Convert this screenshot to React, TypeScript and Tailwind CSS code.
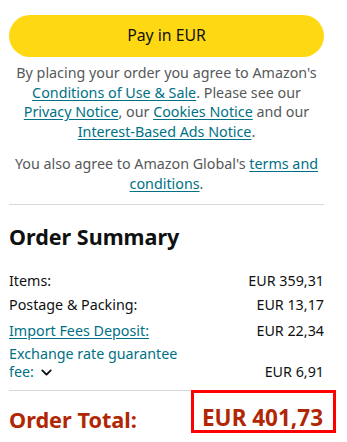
import { ChevronDown } from 'lucide-react';

const link = 'text-[#007185] underline underline-offset-2';

const rows = [
  { label: 'Items:', value: 'EUR 359,31' },
  { label: 'Postage & Packing:', value: 'EUR 13,17' },
];

export default function App() {
  return (
    <div className="w-[347px] h-[442px] overflow-hidden bg-white font-['Noto_Sans',sans-serif]">
      <div className="ml-[9px] w-[315px] pt-[15px]">
        {/* Pay button */}
        <button className="w-full h-[42px] rounded-full bg-[#FFD814] text-[15.8px] text-[#0f1111]">
          Pay in EUR
        </button>

        {/* Legal text */}
        <p className="mt-[6px] -mx-[4px] text-center text-[14.3px] leading-[19.5px] text-[#565959]">
          By placing your order you agree to Amazon's
          <br />
          <span className={link}>Conditions of Use &amp; Sale</span>. Please see our
          <br />
          <span className={link}>Privacy Notice</span>, our <span className={link}>Cookies Notice</span> and our
          <br />
          <span className={link}>Interest-Based Ads Notice</span>.
        </p>
        <p className="mt-[13px] -mx-[4px] text-center text-[14.3px] leading-[19.5px] text-[#565959]">
          You also agree to Amazon Global's <span className={link}>terms and</span>
          <br />
          <span className={link}>conditions</span>.
        </p>

        <div className="mt-[11px] border-t border-[#d5d9d9]" />

        {/* Summary */}
        <h2 className="mt-[20px] text-[21.5px] font-bold leading-[24px] text-[#0f1111]">Order Summary</h2>

        <div className="mt-[22px] flex flex-col text-[14.3px] leading-[20px] text-[#0f1111]">
          {rows.map(r => (
            <div key={r.label} className="flex justify-between h-[24px]">
              <span>{r.label}</span>
              <span>{r.value}</span>
            </div>
          ))}
          <div className="flex justify-between h-[26px] pt-[2px]">
            <span className={link}>Import Fees Deposit:</span>
            <span>EUR 22,34</span>
          </div>
          <div className="flex justify-between items-end">
            <span className="text-[#007185] leading-[18px]">
              Exchange rate guarantee
              <br />
              fee:{' '}
              <ChevronDown className="inline w-[17px] h-[17px] text-[#0f1111] align-[-4px]" strokeWidth={2.6} />
            </span>
            <span className="leading-[18px]">EUR 6,91</span>
          </div>
        </div>

        <div className="mt-[9px] border-t border-[#d5d9d9]" />

        <div className="flex justify-between items-start font-bold text-[#B12704]">
          <span className="pt-[17px] text-[21.7px] leading-[24px]">Order Total:</span>
          <span className="-mr-[12px] -mt-px border-[3px] border-[#ff0000] pl-[8px] pr-[10px] pt-[13px] text-[22.5px] leading-[24px]">
            EUR 401,73
          </span>
        </div>
      </div>
    </div>
  );
}
